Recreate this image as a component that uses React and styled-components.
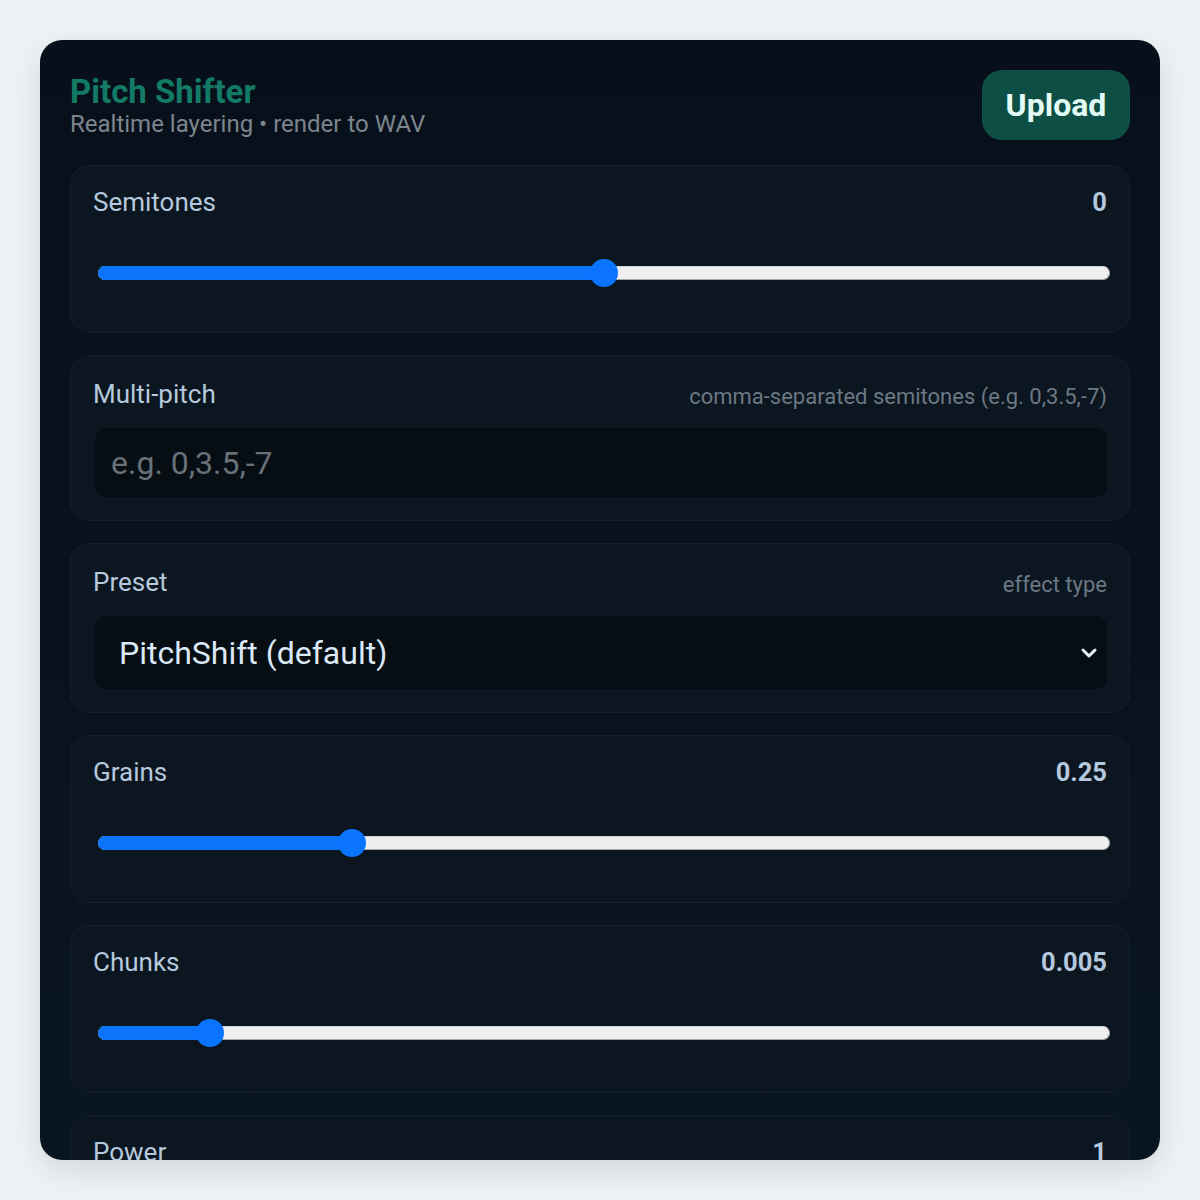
import React from 'react'
import styled, { createGlobalStyle } from 'styled-components'

const GlobalStyle = createGlobalStyle`
    body{
        margin:0;
        background:#eef2f6;
        font-family:Roboto, "Liberation Sans", sans-serif;
    }
`

const Page = styled.div`
    padding:40px;
`

const Card = styled.div`
    height:1120px;
    box-sizing:border-box;
    overflow:hidden;
    border-radius:22px;
    background:linear-gradient(180deg, #07101a 0%, #091521 100%);
    box-shadow:0 10px 30px rgba(15, 30, 45, 0.12);
    padding:30px;
    display:flex;
    flex-direction:column;
    gap:22px;
`

const Header = styled.div`
    display:flex;
    justify-content:space-between;
    align-items:flex-start;
    margin-bottom:3px;
`

const Titles = styled.div`
    padding-top:4px;
`

const Title = styled.h1`
    margin:0;
    font-size:33px;
    line-height:35px;
    font-weight:700;
    color:#137a66;
`

const Subtitle = styled.div`
    font-size:24px;
    line-height:30px;
    color:#7d858e;
`

const UploadButton = styled.button`
    width:148px;
    height:70px;
    border:none;
    border-radius:20px;
    background:#0e4f45;
    color:#e2fcf5;
    font-family:inherit;
    font-size:32px;
    font-weight:700;
`

const Panel = styled.div`
    border:1px solid #142130;
    border-radius:20px;
    background:#0b1620;
    padding:${p => p.$field ? '22px 22px 23px' : '22px 22px 45px'};
    flex-shrink:0;
`

const Row = styled.div`
    display:flex;
    justify-content:space-between;
    align-items:center;
    height:${p => p.$tall ? '32px' : '28px'};
`

const Label = styled.span`
    font-size:26px;
    color:#b6c9dd;
`

const Value = styled.span`
    font-size:25.5px;
    font-weight:700;
    color:#b4c8de;
`

const Hint = styled.span`
    font-size:22px;
    color:#6c7884;
    padding-top:4px;
`

const SliderBox = styled.div`
    position:relative;
    height:28px;
    margin:43px -3px 0 5px;
    display:flex;
    align-items:center;
`

const Track = styled.div`
    position:relative;
    width:100%;
    height:14px;
    box-sizing:border-box;
    border-radius:7px;
    background:#efefef;
    border:1px solid #a7a7a7;
    border-top-color:#d0d0d0;
`

const Fill = styled.div`
    position:absolute;
    left:-1px;
    top:-1px;
    bottom:-1px;
    border-radius:7px;
    background:#0a74fb;
`

const Thumb = styled.div`
    position:absolute;
    top:50%;
    width:28px;
    height:28px;
    margin:-14px 0 0 -14px;
    border-radius:50%;
    background:#0a74ff;
`

const TextInput = styled.input`
    display:block;
    width:calc(100% - 2px);
    margin:18px 0 0 2px;
    height:69px;
    box-sizing:border-box;
    border:none;
    border-radius:12px;
    background:#060d13;
    padding:0 16px;
    font-family:inherit;
    font-size:32px;
    color:#dbe8f5;
    outline:none;
    &::placeholder{
        color:#68717a;
    }
`

const Select = styled.div`
    margin:18px 0 0 2px;
    height:73px;
    border-radius:12px;
    background:#060d13;
    padding:0 6px 0 24px;
    display:flex;
    align-items:center;
    justify-content:space-between;
    font-size:32px;
    color:#dbe8f5;
`

function Slider({ label, value, pct }) {
    return (
        <Panel>
            <Row>
                <Label>{label}</Label>
                <Value>{value}</Value>
            </Row>
            <SliderBox>
                <Track>
                    <Fill style={{ width: `calc(${pct}% + 2px)` }} />
                    <Thumb style={{ left: `${pct}%` }} />
                </Track>
            </SliderBox>
        </Panel>
    )
}

export default function App() {
    return (
        <Page>
            <GlobalStyle />
            <Card>
                <Header>
                    <Titles>
                        <Title>Pitch Shifter</Title>
                        <Subtitle>Realtime layering • render to WAV</Subtitle>
                    </Titles>
                    <UploadButton>Upload</UploadButton>
                </Header>

                <Slider label="Semitones" value="0" pct={50} />

                <Panel $field>
                    <Row $tall>
                        <Label>Multi-pitch</Label>
                        <Hint>comma-separated semitones (e.g. 0,3.5,-7)</Hint>
                    </Row>
                    <TextInput placeholder="e.g. 0,3.5,-7" />
                </Panel>

                <Panel $field>
                    <Row $tall>
                        <Label>Preset</Label>
                        <Hint>effect type</Hint>
                    </Row>
                    <Select>
                        <span>PitchShift (default)</span>
                        <svg width="24" height="20" viewBox="0 0 24 20">
                            <path d="M6 7l6 6 6-6" fill="none" stroke="#e6f0fa" strokeWidth="3" strokeLinecap="round" strokeLinejoin="round" />
                        </svg>
                    </Select>
                </Panel>

                <Slider label="Grains" value="0.25" pct={25} />
                <Slider label="Chunks" value="0.005" pct={11} />
                <Slider label="Power" value="1" pct={50} />
            </Card>
        </Page>
    )
}
